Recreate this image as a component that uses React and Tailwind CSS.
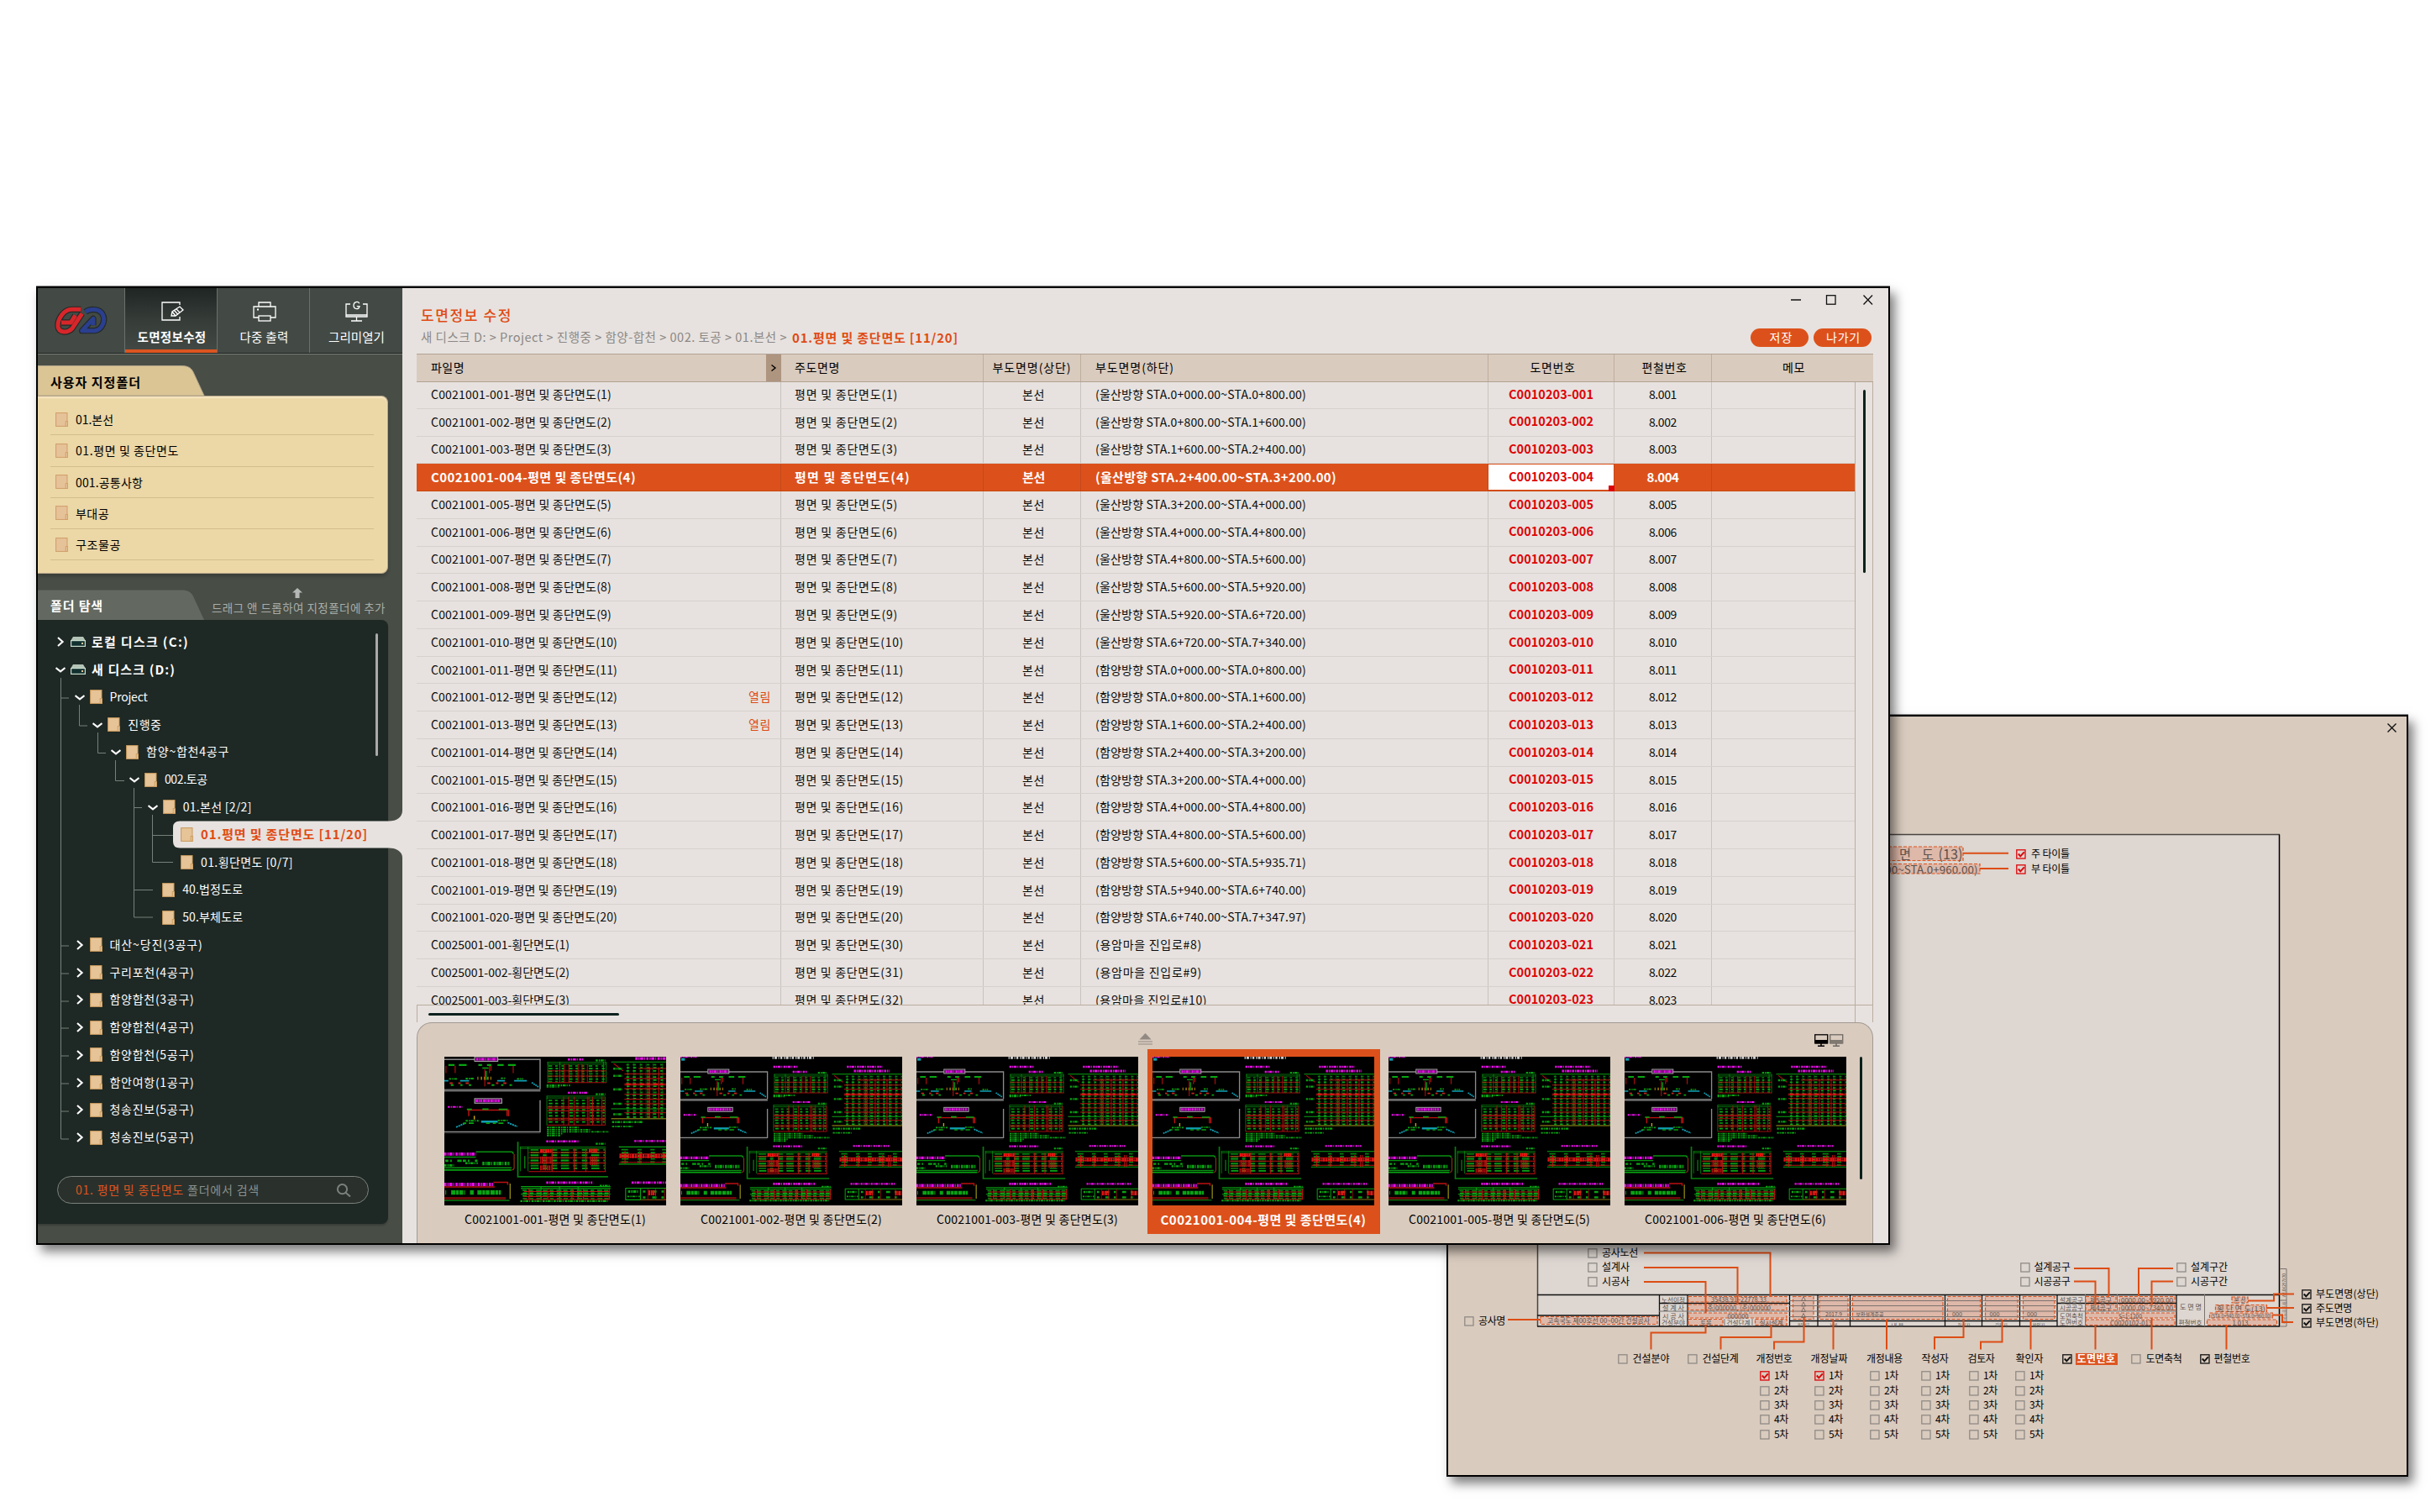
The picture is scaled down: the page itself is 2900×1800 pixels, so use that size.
import React, { useLayoutEffect, useRef } from "react";

const KR = "font-['Noto_Sans_CJK_KR','Noto_Sans',sans-serif]";

/* Single line of text whose tracking is adjusted so that it fills `w` pixels. */
function Fit({ w, className = "", children }) {
  const ref = useRef(null);
  useLayoutEffect(() => {
    const el = ref.current;
    el.style.letterSpacing = "0px";
    const natural = el.getBoundingClientRect().width;
    const n = el.textContent.length;
    if (n > 0 && w) el.style.letterSpacing = `${(w - natural) / n}px`;
  }, [w, children]);
  return (
    <span ref={ref} className={`inline-block -translate-y-px whitespace-pre leading-none ${className}`}>
      {children}
    </span>
  );
}

/* ---------- icons ---------- */
function Logo() {
  const red = "M196 113 H164 C134 113 112 148 114 174 C117 198 148 198 164 182 L200 128 M126 160 H160 L176 134";
  const blue = "M212 122 C228 110 260 110 272 128 C286 150 274 184 246 189 H200 L240 146 V170";
  return (
    <svg viewBox="102 100 192 108" className="h-9 w-16" fill="none" strokeLinejoin="round">
      <path d={blue} stroke="#232a27" strokeWidth="22" />
      <path d={blue} stroke="#2b3f8f" strokeWidth="15" />
      <path d={red} stroke="#232a27" strokeWidth="22" />
      <path d={red} stroke="#d7262b" strokeWidth="15" />
    </svg>
  );
}

function EditIcon() {
  return (
    <svg viewBox="0 0 28 24" className="h-6 w-7" fill="none" stroke="#fff" strokeWidth="1.3">
      <path d="M23 4 V1 H2 V22 H23 V18" />
      <path d="M13 17 L14 12 L23 6 L27 10 L18 17 Z M14 12 L18 17 M16.5 10.5 L20.5 15 M19 9 L23.5 13.5" />
    </svg>
  );
}

function PrinterIcon() {
  return (
    <svg viewBox="0 0 28 24" className="h-6 w-7" fill="none" stroke="#fff" strokeWidth="1.3">
      <path d="M7 6 V1 H21 V6" />
      <path d="M7 19 H1 V6 H27 V19 H21" />
      <rect x="7" y="17" width="14" height="6" />
      <path d="M5 9.5 H7" strokeWidth="2" />
    </svg>
  );
}

function MonitorGIcon() {
  return (
    <svg viewBox="0 0 28 24" className="h-6 w-7 overflow-visible" fill="none" stroke="#fff" strokeWidth="1.3">
      <path d="M6 3 H1 V18 H26 V3 H21 M1 16 H26" />
      <path d="M13.5 18 V23 M7 23 H20" />
      <path d="M16.8 2.2 C15.5 -.4 10 -.4 10 4.8 C10 9.8 17 9.600 17 5.600 H13.8" strokeWidth="1.3" />
    </svg>
  );
}

function FileIcon({ fill = "#e6c497", stroke = "#c99a5c" }) {
  return (
    <svg viewBox="0 0 15 17" className="h-[17px] w-[15px] shrink-0">
      <rect x=".6" y=".6" width="13.4" height="15.8" fill={fill} stroke={stroke} />
      <rect x="12.2" y="10.6" width="2.3" height="5.8" fill={fill} stroke={stroke} strokeWidth=".9" />
    </svg>
  );
}

function DriveIcon() {
  return (
    <svg viewBox="0 0 18 12" className="h-3 w-[18px] shrink-0">
      <path d="M3 0 H15 L18 5 H0 Z" fill="#b3c4b7" />
      <rect x=".6" y="4.6" width="16.8" height="6.8" fill="#11302f" stroke="#c9dccd" strokeWidth="1.2" />
      <rect x="13" y="7" width="2" height="2" fill="#e6c497" />
    </svg>
  );
}

function Chevron({ open }) {
  return (
    <svg viewBox="0 0 12 12" className="size-3 shrink-0" fill="none" stroke="#fff" strokeWidth="2.1">
      <path d={open ? "M0.5 4 L6 8.4 L11.5 4" : "M3 1 L8.6 6 L3 11"} />
    </svg>
  );
}

/* ---------- sidebar ---------- */
function NavTab({ icon, label, w, active }) {
  return (
    <div
      className={`relative flex w-[110px] flex-col items-center border-l border-l-[#6a716b] pl-0.5 pt-4 ${
        active ? "bg-linear-to-b from-[#1f2523] via-[#363d39] to-[#434a45]" : "bg-[#434a45]"
      }`}
    >
      {icon}
      <Fit w={w} className={`mt-3 text-[14.500px] text-white ${active ? "font-bold" : ""}`}>
        {label}
      </Fit>
      {active && <div className="absolute inset-x-0 bottom-0 h-1 bg-[#dd5520]" />}
    </div>
  );
}

function TabShape({ fill, stroke }) {
  return (
    <svg viewBox="0 0 200 36" className="absolute left-0 top-0 h-9 w-[200px]">
      <path d="M0 .5 H170 C180 .5 183 3 186 10 L198 36 H0 Z" fill={fill} stroke={stroke} />
    </svg>
  );
}

const FAVORITES = [
  ["01.본선", 45],
  ["01.평면 및 종단면도", 123],
  ["001.공통사항", 80],
  ["부대공", 40],
  ["구조물공", 54],
];

const TREE = [
  { lv: 0, t: "로컬 디스크 (C:)", w: 116, open: false },
  { lv: 0, t: "새 디스크 (D:)", w: 100, open: true },
  { lv: 1, t: "Project", w: 45, open: true },
  { lv: 2, t: "진행중", w: 40, open: true },
  { lv: 3, t: "함양~합천4공구", w: 99, open: true },
  { lv: 4, t: "002.토공", w: 51, open: true },
  { lv: 5, t: "01.본선 [2/2]", w: 82, open: true },
  { lv: 6, t: "01.평면 및 종단면도 [11/20]", w: 199, leaf: true, active: true },
  { lv: 6, t: "01.횡단면도 [0/7]", w: 110, leaf: true },
  { lv: 5, t: "40.법정도로", w: 72, leaf: true },
  { lv: 5, t: "50.부체도로", w: 72, leaf: true },
  { lv: 1, t: "대산~당진(3공구)", w: 111, open: false },
  { lv: 1, t: "구리포천(4공구)", w: 101, open: false },
  { lv: 1, t: "함양합천(3공구)", w: 101, open: false },
  { lv: 1, t: "함양합천(4공구)", w: 101, open: false },
  { lv: 1, t: "함양합천(5공구)", w: 101, open: false },
  { lv: 1, t: "함안여항(1공구)", w: 101, open: false },
  { lv: 1, t: "청송진보(5공구)", w: 101, open: false },
  { lv: 1, t: "청송진보(5공구)", w: 101, open: false },
];

const TREE_LINES =
  "M27.5 69 V618 H37 M27.5 93 H37 M27.5 388 H37 M27.5 421 H37 M27.5 454 H37 M27.5 486 H37 M27.5 519 H37 M27.5 552 H37 M27.5 585 H37 " +
  "M49.5 101 V126 H59 M71.5 134 V158.5 H81 M92.5 167 V191.5 H103 M114.5 200 V354 H137 M114.5 223.5 H124 M114.5 321.5 H137 " +
  "M136.5 232 V288.5 H161 M136.5 256.5 H161";

function TreeRow({ node }) {
  const indent = node.lv === 0 ? 21 : 43.5 + (node.lv - 1) * 21.8;
  return (
    <div className="relative flex h-[32.78px] items-center" style={{ paddingLeft: indent }}>
      {node.active && (
        <svg viewBox="0 0 273 56" className="absolute -top-3 left-[161px] h-14 w-[273px]">
          <path
            d="M273 0 C273 8 266 12.500 257 12.500 H8 Q0 12.500 0 20 V37 Q0 44.500 8 44.500 H257 C266 44.500 273 49 273 56 Z"
            fill="#e7e2df"
          />
        </svg>
      )}
      {!node.leaf && <Chevron open={node.open} />}
      <div className={`relative flex items-center ${node.leaf ? "ml-[17.500px]" : "ml-1.5"}`}>
        {node.lv === 0 ? <DriveIcon /> : <FileIcon />}
      </div>
      <Fit
        w={node.w}
        className={`relative ${node.lv === 0 ? "ml-[7px] text-[15px] font-bold text-white" : "ml-[9px]"} ${
          node.active ? "text-[15px] font-bold text-[#e04a12]" : "text-[14px] text-white"
        }`}
      >
        {node.t}
      </Fit>
    </div>
  );
}

function Sidebar() {
  return (
    <div className="flex w-[434px] shrink-0 flex-col bg-[#484d46]">
      <div className="flex h-[78px] border-b border-[#1d211f] bg-[#434a45] shadow-[0_1px_0_#7a7f78]">
        <div className="flex w-[103px] items-center justify-center">
          <Logo />
        </div>
        <NavTab icon={<EditIcon />} label="도면정보수정" w={82} active />
        <NavTab icon={<PrinterIcon />} label="다중 출력" w={58} />
        <NavTab icon={<MonitorGIcon />} label="그리미열기" w={67} />
      </div>

      <div className="relative mt-[14px] flex h-9 items-center pl-[15px]">
        <TabShape fill="#dbc594" stroke="#b0a48c" />
        <Fit w={108} className="relative mt-1 text-[15px] font-bold text-black">사용자 지정폴더</Fit>
      </div>
      <div className="h-[212px] w-[417px] rounded-r-lg border border-l-0 border-[#b5a68b] bg-[#ecd7a6] pl-[15px] pr-4 pt-[9px] shadow-[0_3px_4px_rgba(0,0,0,0.2),inset_0_2px_2px_rgba(255,240,210,0.6)]">
        {FAVORITES.map(([t, w]) => (
          <div key={t} className="flex h-[37.250px] items-center border-b border-[#d3bd8c] pl-1.5">
            <FileIcon fill="#e6c299" stroke="#cf9d68" />
            <Fit w={w} className="ml-[9px] mt-0.5 text-[14px] text-black">{t}</Fit>
          </div>
        ))}
      </div>

      <div className="relative mt-[19px] flex h-9 items-center justify-between pl-[15px] pr-5">
        <TabShape fill="#636961" stroke="none" />
        <Fit w={63} className="relative mt-0.5 text-[15px] font-bold text-white">폴더 탐색</Fit>
        <Fit w={207} className="relative mt-2.5 text-[13.500px] text-[#a9ada8]">드래그 앤 드롭하여 지정폴더에 추가</Fit>
        <svg viewBox="0 0 12 12" className="absolute -top-0.5 left-[303px] size-3" fill="#b5b8b4">
          <path d="M6 0 L12 5.500 H8.500 V12 H3.500 V5.500 H0 Z" />
        </svg>
      </div>
      <div className="relative h-[719px] w-[434px]">
        <div className="absolute inset-y-0 left-0 w-[417px] rounded-r-lg bg-[#1e2824] shadow-[0_2px_2px_rgba(0,0,0,0.2)]" />
        <svg viewBox="0 0 434 719" className="absolute inset-0" fill="none" stroke="#76807b">
          <path d={TREE_LINES} />
        </svg>
        <div className="relative pt-[10px]">
          {TREE.map((n, i) => (
            <TreeRow key={i} node={n} />
          ))}
        </div>
        <div className="absolute left-[402px] top-4 h-[146px] w-[3px] rounded-full bg-[#a9aaa9]" />
        <div className="relative ml-[23px] mt-[29.500px] flex h-[33px] w-[371px] items-center justify-between rounded-full border border-[#7d837e] bg-[#2a312c] pl-[21px] pr-5">
          <div className="flex items-center gap-1">
            <Fit w={129} className="text-[14px] text-[#dd5520]">01. 평면 및 종단면도</Fit>
            <Fit w={86} className="text-[14px] text-[#8b908c]">폴더에서 검색</Fit>
          </div>
          <svg viewBox="0 0 18 16" className="h-4 w-[18px]" fill="none" stroke="#7b817d" strokeWidth="2">
            <circle cx="7.500" cy="6.700" r="5.600" />
            <path d="M11.500 10.700 L17 15.500" />
          </svg>
        </div>
      </div>
    </div>
  );
}

/* ---------- drawing table ---------- */
const ULSAN = ["0+000.00~STA.0+800.00", "0+800.00~STA.1+600.00", "1+600.00~STA.2+400.00", "2+400.00~STA.3+200.00", "3+200.00~STA.4+000.00", "4+000.00~STA.4+800.00", "4+800.00~STA.5+600.00", "5+600.00~STA.5+920.00", "5+920.00~STA.6+720.00", "6+720.00~STA.7+340.00"];
const HAMYANG = ["0+000.00~STA.0+800.00", "0+800.00~STA.1+600.00", "1+600.00~STA.2+400.00", "2+400.00~STA.3+200.00", "3+200.00~STA.4+000.00", "4+000.00~STA.4+800.00", "4+800.00~STA.5+600.00", "5+600.00~STA.5+935.71", "5+940.00~STA.6+740.00", "6+740.00~STA.7+347.97"];

const pad = (n) => String(n).padStart(3, "0");
const ROWS = Array.from({ length: 23 }, (_, k) => {
  const i = k + 1;
  const cross = i > 20;
  return {
    i,
    file: cross ? `C0025001-${pad(i - 20)}-횡단면도(${i - 20})` : `C0021001-${pad(i)}-평면 및 종단면도(${i})`,
    fileW: cross ? 165 : i > 9 ? 222 : 215,
    main: `평면 및 종단면도(${cross ? i + 9 : i})`,
    mainW: i > 9 ? 130 : 123,
    sub: cross
      ? `(용암마을 진입로#${i - 13})`
      : `(${i <= 10 ? "울산" : "함양"}방향 STA.${i <= 10 ? ULSAN[i - 1] : HAMYANG[i - 11]})`,
    subW: cross ? (i === 23 ? 133 : 127) : 251,
    opened: i === 12 || i === 13,
    selected: i === 4,
  };
});

const COLS = "grid grid-cols-[434px_241px_116px_485px_150px_116px_170px]";

function Row({ r }) {
  const s = r.selected;
  const cell = `flex items-center border-r ${s ? "border-[#c4481a]" : "border-[#c9c3bf]"}`;
  return (
    <div
      className={`${COLS} h-[32.780px] border-b ${
        s ? "border-[#c8480f] bg-[#dc511b] text-[15px] font-bold text-white" : "border-[#d6d1cd] text-[14px] text-[#0c0c0c]"
      }`}
    >
      <div className={`${cell} justify-between pl-[17px] pr-[11px]`}>
        <Fit w={s ? 244 : r.fileW}>{r.file}</Fit>
        {r.opened && <Fit w={27} className="text-[#dd4a14]">열림</Fit>}
      </div>
      <div className={`${cell} pl-4`}>
        <Fit w={s ? 138 : r.mainW}>{r.main}</Fit>
      </div>
      <div className={`${cell} justify-center pl-1`}>
        <Fit w={27}>본선</Fit>
      </div>
      <div className={`${cell} pl-[17px]`}>
        <Fit w={s ? 287 : r.subW}>{r.sub}</Fit>
      </div>
      <div className={`${cell} relative justify-center font-bold text-[#dd0408]`}>
        {s && <div className="absolute inset-x-0 inset-y-px bg-white" />}
        {s && <div className="absolute -bottom-px -right-px h-[7px] w-[7px] bg-[#dd0408]" />}
        <Fit w={101} className="relative text-[14.500px]">{`C0010203-${pad(r.i)}`}</Fit>
      </div>
      <div className={`${cell} justify-center`}>
        <Fit w={s ? 38 : 33}>{`8.${pad(r.i)}`}</Fit>
      </div>
      <div />
    </div>
  );
}

function DrawingTable() {
  const h = "flex items-center border-r border-[#bfae9d]";
  return (
    <div className="ml-[17px] w-[1734px]">
      <div className="grid h-[34px] grid-cols-[434px_241px_116px_485px_150px_116px_191px] border-y border-[#b1a294] bg-[#d9cbbe] text-[14px] text-black">
        <div className="flex items-center justify-between pl-[17px]">
          <Fit w={40}>파일명</Fit>
          <div className="flex h-full w-[18px] items-center justify-center bg-[#ae957f]">
            <svg viewBox="0 0 8 8" className="size-2" fill="none" stroke="#000" strokeWidth="1.400">
              <path d="M1.500 0.500 L6 4 L1.500 7.500" />
            </svg>
          </div>
        </div>
        <div className={`${h} pl-4`}><Fit w={54}>주도면명</Fit></div>
        <div className={`${h} justify-center`}><Fit w={94}>부도면명(상단)</Fit></div>
        <div className={`${h} pl-[17px]`}><Fit w={94}>부도면명(하단)</Fit></div>
        <div className={`${h} justify-center pl-1`}><Fit w={54}>도면번호</Fit></div>
        <div className={`${h} justify-center pl-1`}><Fit w={54}>편철번호</Fit></div>
        <div className="flex items-center justify-center pl-1"><Fit w={27}>메모</Fit></div>
      </div>
      <div className="flex h-[741px] border-r border-[#b9ad9f]">
        <div className="w-[1712px] overflow-hidden">
          <div className="-mt-px">
            {ROWS.map((r) => (
              <Row key={r.i} r={r} />
            ))}
          </div>
        </div>
        <div className="flex flex-1 justify-center border-l border-[#b9ad9f] pt-[9px]">
          <div className="h-[218px] w-[3px] rounded-full bg-[#0b211d]" />
        </div>
      </div>
      <div className="flex h-[21px] border border-b-0 border-[#b9ad9f]">
        <div className="flex w-[1712px] items-center border-r border-[#b9ad9f] pl-[13px]">
          <div className="h-[3px] w-[227px] rounded-full bg-[#0b211d]" />
        </div>
      </div>
    </div>
  );
}

/* ---------- thumbnails ---------- */
const G = "#08a412";
const R = "#bd1010";
const M = "#e60be6";
const C = "#0fa0b4";

function Dabs({ x1, x2, y, h = 7, c = G, d = "7 3 4 2 10 3 3 4", o = 1 }) {
  return <path d={`M${x1} ${y} H${x2}`} stroke={c} strokeWidth={h} strokeDasharray={d} opacity={o} />;
}

function Lines({ xs = [], ys = [], x, y, w, h, c, sw = 2 }) {
  const d = xs.map((v) => `M${v} ${y} V${y + h}`).join(" ") + ys.map((v) => `M${x} ${v} H${x + w}`).join(" ");
  return <path d={d} stroke={c} strokeWidth={sw} fill="none" />;
}

function Cells({ x, w, y, step, n, d }) {
  return Array.from({ length: n }, (_, i) => (
    <Dabs key={i} x1={x + (i % 2)} x2={x + w} y={y + i * step} h={5} d={d} c={i % 3 ? "#09a814" : "#07800d"} />
  ));
}

function Thumb({ first }) {
  return (
    <svg viewBox={first ? "17 144 718 483" : "17 99 790 531"} preserveAspectRatio="none" className="block h-[177px] w-[264px] bg-black" fill="none">
      <Dabs x1={17} x2={75} y={100} c={M} h={5} />
      <rect x="20" y="104" width="13" height="9" fill={C} />
      <Dabs x1={345} x2={495} y={102} c="#cfcfcf" h={10} d="4 3 9 5 3 4 7 6" />
      {/* typical sections */}
      <path d="M17 153 H327 V250" stroke="#8b8b8b" strokeWidth="4" />
      <path d="M17 253 H328" stroke="#6c6c6c" strokeWidth="8" />
      <rect x="115" y="144" width="75" height="15" fill="#3b1040" stroke="#a0a0a0" strokeWidth="3" />
      <Dabs x1={120} x2={187} y={152} c={M} h={8} />
      <Dabs x1={30} x2={285} y={171} h={6} d="20 14 25 38 12 16 14 20" />
      <path d="M22 174 V197 M52 174 V197 M163 174 V197 M168 174 V190 M240 174 V197 M148 185 V240" stroke={R} strokeWidth="3" />
      <path d="M140 181 H160 M152 190 V220" stroke={G} strokeWidth="4" />
      <Dabs x1={124} x2={170} y={214} c="#b08a10" h={10} d="3 8 4 6" />
      <path d="M17 222 H30 M68 222 H97 M188 222 H213 M243 222 H284" stroke={C} strokeWidth="5" />
      <path d="M300 228 L323 243" stroke={C} strokeWidth="5" strokeDasharray="5 2" />
      <Dabs x1={32} x2={58} y={216} h={5} />
      <Dabs x1={86} x2={112} y={215} h={5} />
      <Dabs x1={200} x2={216} y={214} h={5} />
      <Dabs x1={252} x2={272} y={216} h={5} />
      <Dabs x1={34} x2={270} y={230} h={5} c="#c2261a" d="10 18 8 16 10 60" />
      <Dabs x1={38} x2={280} y={236} h={5} d="9 22 7 20 8 66" />
      <path d="M327 285 V388 H17" stroke="#8b8b8b" strokeWidth="4" />
      <path d="M17 393 H327" stroke="#1c1c1c" strokeWidth="3" />
      <rect x="115" y="280" width="88" height="15" fill="#3b1040" stroke="#a0a0a0" strokeWidth="3" />
      <Dabs x1={118} x2={196} y={287} c={M} h={9} d="8 2 3 2 6 3" />
      <Dabs x1={28} x2={75} y={307} c={M} h={6} />
      <path d="M92 317 H226 M96 318 V337 M220 318 V337 M225 318 V337" stroke={R} strokeWidth="4" />
      <path d="M90 315 H106 M140 314 H160 M193 315 H222" stroke={G} strokeWidth="5" />
      <path d="M114 336 V348" stroke="#c9a414" strokeWidth="4" />
      <path d="M136 355 H190" stroke={C} strokeWidth="7" />
      <path d="M55 373 L84 360 M222 358 L253 371" stroke={C} strokeWidth="5" strokeDasharray="6 2" />
      <Dabs x1={86} x2={128} y={352} h={5} />
      <Dabs x1={190} x2={226} y={351} h={5} />
      <Dabs x1={78} x2={236} y={360} h={5} d="10 8 16 40 12 10" />
      {/* table A */}
      <Dabs x1={348} x2={436} y={135} c={M} h={7} />
      <Dabs x1={417} x2={468} y={153} c={M} h={7} />
      <Dabs x1={507} x2={538} y={156} h={6} />
      <Lines x={350} y={161} w={192} h={68} c={G} xs={[352, 391, 532, 541]} ys={[162, 168]} />
      <Cells x={354} w={186} y={174} step={8.500} n={7} d="12 10 8 12 9 14" />
      <Lines x={350} y={168} w={192} h={60} c={R} xs={[405, 420, 450, 463, 480]} ys={[190, 207, 228]} sw={2.500} />
      <Dabs x1={348} x2={424} y={237} h={6} />
      <Dabs x1={348} x2={388} y={242} h={4} />
      {/* table B */}
      <Dabs x1={417} x2={481} y={261} c={M} h={6} />
      <Dabs x1={507} x2={538} y={266} h={6} />
      <Lines x={348} y={271} w={190} h={96} c={G} xs={[349]} ys={[272, 278]} />
      <Cells x={354} w={182} y={286} step={10} n={8} d="12 9 9 11 10 16" />
      <Lines x={350} y={274} w={188} h={92} c={R} xs={[403, 419, 437, 480, 485, 497, 527, 538]} ys={[307, 311, 320, 344, 349, 366]} sw={2.500} />
      {[374, 381, 388, 394, 400].map((y, i) => (
        <Dabs key={y} x1={349} x2={[452, 490, 548, 400, 395][i]} y={y} h={5} />
      ))}
      {/* table C */}
      <Dabs x1={610} x2={736} y={135} c={M} h={7} />
      <Dabs x1={635} x2={761} y={150} c={M} h={9} />
      <Lines x={557} y={161} w={250} h={150} c={G} ys={[161, 313]} sw={3} />
      <path d="M557 345 H807" stroke="#6f6a10" strokeWidth="4" />
      <path d="M565 166 L596 190" stroke={R} strokeWidth="3" />
      <Lines x={600} y={165} w={1} h={178} c="#0a5a10" xs={[611, 631, 651, 670, 692, 724, 742, 762, 784, 803]} sw={2} />
      <Cells x={606} w={201} y={170} step={10} n={18} d="9 12 10 13 8 14" />
      <Lines x={645} y={178} w={162} h={166} c={R} xs={[676, 682, 711, 753]} ys={[182]} sw={3} />
      <Lines x={600} y={178} w={207} h={1} c={R} ys={[200, 215, 232, 236, 248, 266, 282, 297, 326]} sw={3} />
      <Dabs x1={606} x2={807} y={233} h={5} c="#ee1616" d="14 8 10 12" />
      {[183, 206, 250, 297, 331].map((y) => (
        <Dabs key={y} x1={564} x2={594} y={y} h={7} />
      ))}
      <Dabs x1={560} x2={660} y={356} h={7} />
      <Dabs x1={560} x2={627} y={371} h={5} />
      {/* table D */}
      <Dabs x1={347} x2={451} y={419} c={M} h={7} />
      <Dabs x1={507} x2={538} y={427} h={6} />
      <path d="M255 420 V534 H547" stroke="#0a7d10" strokeWidth="5" />
      <Lines x={262} y={436} w={278} h={80} c={G} xs={[263, 288]} ys={[437, 442]} />
      <Cells x={296} w={240} y={447} step={8.500} n={8} d="26 14 12 16 18 12" />
      <Lines x={290} y={442} w={250} h={75} c={R} xs={[366, 438, 475, 538]} ys={[455, 472, 489, 517]} sw={3} />
      <Dabs x1={276} x2={282} y={487} h={40} d="3 20" />
      <Dabs x1={327} x2={364} y={450} h={12} c="#f01212" d="8 1 5 2" />
      <Dabs x1={327} x2={364} y={480} h={24} c="#c81010" d="3 2 6 2" o={0.85} />
      <Dabs x1={327} x2={364} y={505} h={16} c="#e01010" d="5 2" o={0.85} />
      <Dabs x1={485} x2={513} y={449} h={12} c="#f01212" d="6 1 5 2" />
      <Dabs x1={488} x2={512} y={482} h={28} c="#c81010" d="4 3" o={0.85} />
      {/* table E */}
      <Dabs x1={632} x2={761} y={418} c={M} h={6} />
      <Lines x={582} y={437} w={225} h={56} c={G} xs={[]} ys={[437, 493]} sw={3} />
      <Cells x={590} w={217} y={446} step={10} n={5} d="22 30 14 28 14 24" />
      <Lines x={584} y={450} w={223} h={42} c={R} xs={[602, 650, 738, 758, 765]} ys={[460, 470, 487]} sw={3} />
      <Dabs x1={584} x2={807} y={467} c="#ee1414" h={13} d="6 3 3 2 9 2" o={0.9} />
      {/* note boxes */}
      <Dabs x1={17} x2={119} y={460} c={M} h={10} />
      <path d="M17 470 H119 M119 453 H234 Q240 453 240 460 M17 505 H235" stroke="#0a8f12" strokeWidth="4" />
      <path d="M243 460 V504 Q243 510 236 512" stroke="#8f3a10" strokeWidth="3" />
      <path d="M17 512 H234" stroke={G} strokeWidth="5" />
      <Dabs x1={20} x2={124} y={482} h={7} d="10 6 5 18 14 4" />
      <Dabs x1={17} x2={48} y={497} h={7} />
      <Dabs x1={85} x2={125} y={490} h={7} />
      <Dabs x1={140} x2={229} y={491} h={12} />
      <Dabs x1={17} x2={176} y={559} c={M} h={11} />
      <path d="M17 567 H180 M176 552 H222 V560" stroke={R} strokeWidth="4" />
      <path d="M230 556 V606" stroke="#8a8412" strokeWidth="4" />
      <path d="M17 604 H216" stroke="#6e0a0a" strokeWidth="8" />
      <path d="M17 611 H228" stroke="#0a8f12" strokeWidth="3" />
      <Dabs x1={20} x2={112} y={585} h={14} d="3 16 14 2 9 2 12 3" />
      <Dabs x1={124} x2={200} y={585} h={14} d="14 2 9 2 12 3" />
      {/* bottom tables */}
      <Dabs x1={347} x2={496} y={553} c={M} h={8} />
      <Lines x={265} y={567} w={290} h={42} c={G} xs={[330, 390, 450]} ys={[566, 572, 590]} sw={3} />
      <Cells x={270} w={282} y={578} step={9} n={4} d="14 8 12 10 16 6" />
      <Lines x={275} y={572} w={278} h={36} c={R} xs={[291, 352, 430, 467, 551]} ys={[582, 598, 608]} sw={3} />
      <Dabs x1={263} x2={546} y={613} h={6} />
      <Dabs x1={520} x2={552} y={563} h={6} />
      <Dabs x1={623} x2={781} y={553} c={M} h={7} />
      <Lines x={603} y={570} w={204} h={40} c={G} xs={[604, 652]} ys={[571, 609]} sw={3} />
      <Dabs x1={612} x2={645} y={582} h={8} />
      <Dabs x1={609} x2={650} y={598} h={5} />
      <Dabs x1={660} x2={807} y={582} h={7} d="8 22 14 16" />
      <Dabs x1={660} x2={807} y={601} h={7} d="8 22 14 16" />
      <Lines x={652} y={572} w={155} h={38} c={R} xs={[676, 701, 730, 783]} ys={[609]} />
      <Dabs x1={678} x2={702} y={586} c="#e81414" h={16} d="6 2 4 1" />
      <Dabs x1={782} x2={805} y={586} c="#e81414" h={16} d="6 2 4 1" />
    </svg>
  );
}

function ThumbPanel() {
  return (
    <div className="relative ml-[17px] flex w-[1734px] flex-1 flex-col rounded-t-[18px] border border-b-0 border-[#a29a92] bg-[#d9cbbe]">
      <svg viewBox="0 0 17 14" className="absolute left-[858px] top-[12px] h-3.5 w-[17px]">
        <path d="M8.500 0 L15.500 7.500 H1.500 Z" fill="#928a82" />
        <path d="M0 10 H17 M0 13 H17" stroke="#928a82" strokeWidth="1.200" />
      </svg>
      <svg viewBox="0 0 36 15" className="absolute left-[1662px] top-[13px] h-[15px] w-9" fill="none">
        <rect x="1.700" y=".8" width="15" height="10" stroke="#000" strokeWidth="1.300" />
        <path d="M1.500 7 H17 V11.500 H1.500 Z" fill="#000" />
        <path d="M9 11 V14 M5 14.200 H13" stroke="#000" strokeWidth="1.500" />
        <rect x="19.700" y=".8" width="15" height="10" stroke="#6e6863" strokeWidth="1.300" />
        <path d="M19.500 7 H35 V11.500 H19.500 Z" fill="#807972" />
        <path d="M27 11 V14 M23 14.200 H31" stroke="#6e6863" strokeWidth="1.500" />
      </svg>
      <div className="ml-[25.500px] mt-[31px] flex gap-[4px]">
        {[1, 2, 3, 4, 5, 6].map((n) => {
          const s = n === 4;
          return (
            <div key={n} className={`flex h-[220px] w-[277px] flex-col items-center pt-[9px] ${s ? "bg-[#dc511b]" : ""}`}>
              <Thumb first={n === 1} />
              <div className="flex h-[34px] items-center">
                <Fit w={s ? 245 : 216} className={s ? "text-[15px] font-bold text-white" : "text-[14px] text-black"}>
                  {`C0021001-${pad(n)}-평면 및 종단면도(${n})`}
                </Fit>
              </div>
            </div>
          );
        })}
      </div>
      <div className="absolute left-[1717px] top-[40px] h-[146px] w-[3px] rounded-full bg-[#0b211d]" />
    </div>
  );
}

/* ---------- main window ---------- */
function MainWindow() {
  return (
    <div className="absolute left-[43px] top-[341px] flex h-[1141px] w-[2207px] border-2 border-black bg-[#e7e2df] shadow-[0_-1px_0_#8b8b8b,6px_8px_12px_rgba(0,0,0,0.5)]">
      <Sidebar />
      <div className="flex flex-1 flex-col">
        <div className="flex h-[78px] justify-between pl-[22px]">
          <div className="flex flex-col items-start pt-6">
            <Fit w={109} className="text-[17px] font-medium text-[#e04a12]">도면정보 수정</Fit>
            <div className="mt-[11px] flex items-center gap-[6px]">
              <Fit w={436} className="text-[14.500px] text-[#8c8885]">
                {"새 디스크 D: > Project > 진행중 > 함양-합천 > 002. 토공 > 01.본선 >"}
              </Fit>
              <Fit w={198} className="text-[15px] font-bold text-[#e04a12]">01.평면 및 종단면도 [11/20]</Fit>
            </div>
          </div>
          <div className="flex flex-col items-end pr-5">
            <svg viewBox="0 0 98 12" className="mr-[-2px] mt-[8px] h-3 w-[98px]" fill="none" stroke="#111" strokeWidth="1.300">
              <path d="M0 6 H12 M86.500 .5 L97 11.500 M97 .5 L86.500 11.500" />
              <rect x="42.500" y=".7" width="10.500" height="10.500" />
            </svg>
            <div className="mt-[28px] flex gap-1.5 text-[14px] text-white">
              <div className="flex h-[22px] w-[69px] items-center justify-center rounded-full bg-[#dc511b] pl-1"><Fit w={28}>저장</Fit></div>
              <div className="flex h-[22px] w-[69px] items-center justify-center rounded-full bg-[#dc511b] pl-0.5"><Fit w={41}>나가기</Fit></div>
            </div>
          </div>
        </div>
        <DrawingTable />
        <ThumbPanel />
      </div>
    </div>
  );
}

/* ---------- field dialog ---------- */
function Box({ state }) {
  const col = state === "red" ? "#dd0408" : state === "on" ? "#111" : "#8b8681";
  return (
    <svg viewBox="0 0 12 12" className="size-3 shrink-0" fill="none">
      <rect x=".8" y=".8" width="10.200" height="10.200" stroke={col} strokeWidth={state ? 1.300 : 1.200} />
      {state && <path d="M2.800 5.500 L5.300 8.300 L9.800 3.300" stroke={col} strokeWidth="2" />}
    </svg>
  );
}

/* [box x, centre y, text x, text width, label, state] in desktop coordinates */
const FIELDS = [
  [2400, 1017, 2418, 46, "주 타이틀", "red"],
  [2400, 1034.5, 2418, 46, "부 타이틀", "red"],
  [1890, 1491.5, 1907, 43, "공사노선"],
  [1890, 1508.5, 1907, 33, "설계사"],
  [1890, 1525.5, 1907, 33, "시공사"],
  [1743, 1572.5, 1760, 32, "공사명"],
  [2405, 1508.5, 2421.5, 43, "설계공구"],
  [2405, 1525.5, 2421.5, 43, "시공공구"],
  [2591, 1508.5, 2608, 44, "설계구간"],
  [2591, 1525.5, 2608, 44, "시공구간"],
  [2740, 1540.5, 2757, 75, "부도면명(상단)", "on"],
  [2740, 1558, 2757, 43, "주도면명", "on"],
  [2740, 1575, 2757, 75, "부도면명(하단)", "on"],
  [1926, 1617.5, 1943.5, 44, "건설분야"],
  [2009, 1617.5, 2026.5, 43, "건설단계"],
  [2455, 1617.5, 2470.5, 44, "도면번호", "on", true],
  [2537, 1617.5, 2554.5, 43, "도면축척"],
  [2619, 1617.5, 2635.5, 43, "편철번호", "on"],
];

const REVISIONS = [
  [2095, 2090.5, 43, "개정번호", true],
  [2160, 2155.5, 44, "개정날짜", true],
  [2226, 2222, 43, "개정내용"],
  [2287, 2287.5, 32, "작성자"],
  [2344, 2342.5, 32, "검토자"],
  [2399, 2399.5, 33, "확인자"],
];

function S({ x, y, w, t, f = 7.5, fill = "#5a524d", mid = true }) {
  return (
    <text x={x} y={y} fontSize={f} fill={fill} textAnchor={mid ? "middle" : "start"} dominantBaseline="central" textLength={w} lengthAdjust="spacingAndGlyphs">
      {t}
    </text>
  );
}

const ZONES = [
  [1834, 1567.5, 139, 9], [2010, 1543.5, 117, 6.5], [2010, 1553, 117, 6.5], [2010, 1563, 117, 6], [2010, 1570.5, 41, 7],
  [2089.5, 1570.5, 37.5, 7], [2134.5, 1543.5, 24.5, 27], [2166, 1543.5, 34, 27], [2205.5, 1543.5, 107.5, 27],
  [2318.5, 1543.5, 39, 27], [2363.5, 1543.5, 38.5, 27], [2408.5, 1543.5, 37.5, 27], [2483, 1543.5, 36, 6.5],
  [2523, 1543.5, 66, 6.5], [2483, 1553, 36, 6.5], [2523, 1553, 66, 6.5], [2483, 1563, 106, 6], [2483, 1571, 106, 6.5],
  [2657, 1544, 19, 7], [2637.5, 1553.5, 61, 8], [2630.5, 1563, 75, 6], [2627.5, 1571, 83, 6.5],
  [2200, 1008, 137, 16.5], [2170, 1028.5, 187, 11.5],
];

function Sheet() {
  const revs = [2147, 2183, 2259, 2338, 2382.5, 2427];
  const names = ["개정번호", "날짜", "내  용", "작성자", "검토자", "확인자"];
  return (
    <svg viewBox="1724 853 1141 903" className="absolute left-0 top-0 h-[903px] w-[1141px]" fill="none">
      <rect x="1830.500" y="993.500" width="883.500" height="585.500" fill="#ddd6d1" />
      <g fill="#e08a6a" fillOpacity=".38">
        {ZONES.map((z, i) => (
          <rect key={i} x={z[0]} y={z[1]} width={z[2]} height={z[3]} />
        ))}
      </g>
      <path d="M1830.500 1579 V993.500 H2714" stroke="#4a4441" strokeWidth="1.500" />
      <path d="M2713.500 993.500 V1579" stroke="#000" strokeWidth="1.500" />
      <path d="M1830 1541.500 H2714 M1830 1579 H2714 M1830 1566 H1975 M1975.500 1541 V1579 M2009 1541 V1579 M2130.500 1541 V1579 M2164 1541 V1579 M2202.500 1541 V1579 M2315.500 1541 V1579 M2359.500 1541 V1579 M2404.500 1541 V1579 M2449 1541 V1579 M2591 1541 V1579 M1975 1551.500 H2130 M2449 1551.500 H2591 M2130 1572.500 H2449" stroke="#111" strokeWidth="1.300" />
      <path d="M1975 1561 H2130 M2449 1561 H2591 M2130 1548.500 H2449 M2130 1554.500 H2449 M2130 1561 H2449 M2130 1567.500 H2449 M2482.500 1541 V1579 M2520.500 1541 V1560 M2624.500 1541 V1579 M2714 1510.500 H2722 V1579 H2714 M2714 1548 H2722 M2053 1570 V1579 M2086 1570 V1579" stroke="#7b736e" />
      <g stroke="#dd5520" strokeDasharray="4 2" strokeWidth="1.200">
        {ZONES.map((z, i) => (
          <rect key={i} x={z[0]} y={z[1]} width={z[2]} height={z[3]} />
        ))}
      </g>
      <S x={2268} y={1015.500} w={14} t="면" f={16} />
      <S x={2295} y={1015.500} w={14} t="도" f={16} />
      <S x={2322} y={1015.500} w={29} t="(13)" f={17} />
      <S x={2263} y={1034} w={183} t="(STA.0+940.00~STA.0+960.00)" f={12.500} />
      <S x={1903} y={1571.500} w={122} t="고속국도 제00호선 00~00간 건설공사" />
      <S x={1992} y={1547} w={28} t="노선이정" />
      <S x={1992} y={1556.500} w={26} t="설 계 사" />
      <S x={1992} y={1566} w={26} t="시 공 사" />
      <S x={1992} y={1574} w={28} t="건설분야" />
      <S x={2070} y={1546.500} w={66} t="35438.91~22778.33" />
      <S x={2069} y={1556.500} w={78} t="(주)000000, (주)000000" />
      <S x={2069} y={1566} w={25} t="000000" />
      <S x={2031} y={1574} w={13} t="토목" />
      <S x={2069.500} y={1574} w={28} t="건설단계" />
      <S x={2108.500} y={1574} w={28} t="실시설계" />
      {[1545.5, 1552, 1558.5, 1565.5].map((y) => (
        <path key={y} d={`M2144.500 ${y + 3} L2147 ${y - 2} L2149.500 ${y + 3} Z`} stroke="#6b5f58" strokeWidth=".8" />
      ))}
      <S x={2183} y={1564.500} w={20} t="2017.9" f={6} />
      <S x={2226} y={1564.500} w={33} t="보완설계준공" f={6} />
      {[2330, 2374.5, 2419].map((x) => (
        <S key={x} x={x} y={1564.500} w={12} t="000" f={6} />
      ))}
      {revs.map((x, i) => (
        <S key={x} x={x} y={1576} w={i === 1 ? 9 : 15} t={names[i]} f={5} />
      ))}
      <S x={2466} y={1547} w={28} t="설계공구" />
      <S x={2466} y={1556.500} w={28} t="시공공구" />
      <S x={2466} y={1566} w={28} t="도면축척" />
      <S x={2466} y={1574} w={28} t="도면번호" />
      <S x={2501} y={1547} w={26} t="제5공구" />
      <S x={2501} y={1556.500} w={26} t="제4공구" />
      <S x={2556} y={1547} w={62} t="0000.00~5920.00" />
      <S x={2556} y={1556.500} w={62} t="0000.00~7340.00" />
      <S x={2536} y={1566} w={28} t="S=1:1200" />
      <S x={2537} y={1574} w={50} t="C0020102-013" />
      <S x={2608} y={1555.500} w={26} t="도 면 명" />
      <S x={2607.500} y={1574} w={28} t="편철번호" />
      <S x={2666.500} y={1547.500} w={14} t="본 선" />
      <S x={2668} y={1557.500} w={58} t="횡 단 면 도(13)" />
      <S x={2668} y={1566} w={72} t="(STA.0+940.00~STA.0+960.00)" f={6} />
      <S x={2667} y={1574.500} w={19} t="1.013" />
      <g transform="translate(2718 1530) rotate(-90)"><S x={0} y={0} w={28} t="A3.0X297X70" f={5} /></g>
      <g transform="translate(2718 1563) rotate(-90)"><S x={0} y={0} w={26} t="한국도로공사" f={5} /></g>
      <path
        d="M2337 1015.700 H2391 M2357 1034 H2391 M1957 1491.500 H2107.500 V1543 M1957 1509 H2068.500 V1553 M1957 1526 H2030.500 V1563 M1795 1571 H1834
           M2030.500 1577 V1586.500 H1965.500 V1606.500 M2108.500 1577 V1592 H2048.500 V1606.500 M2147.500 1568 V1597.500 H2112 V1606.500 M2182.500 1571 V1606.500 M2246 1571 V1606.500
           M2337.500 1571 V1592 H2303 V1606.500 M2383.500 1571 V1597.500 H2358 V1606.500 M2417.500 1571 V1606.500
           M2469 1510 H2510.500 V1543 M2469 1525.500 H2494.500 V1553 M2587 1510 H2546 V1543 M2587 1525.500 H2561.500 V1553
           M2494.500 1577 V1606.500 M2561.500 1569 V1606.500 M2650.500 1577 V1606.500
           M2731 1540.500 H2707 V1548.500 H2676 M2698 1557 H2731 M2705 1565.500 H2717 V1574 H2730"
        stroke="#dd4d14"
        strokeWidth="2"
      />
    </svg>
  );
}

function FieldDialog() {
  return (
    <div className="absolute left-[1722px] top-[851px] h-[907px] w-[1145px] border-2 border-black bg-[#d9cbbe] text-[12px] text-black shadow-[0_-1px_0_#8b8b8b,6px_8px_12px_rgba(0,0,0,0.5)]">
      <svg viewBox="0 0 11 11" className="absolute right-[12px] top-2 size-[11px]" stroke="#111" strokeWidth="1.400">
        <path d="M.5 .5 L10.500 10.500 M10.500 .5 L.5 10.500" />
      </svg>
      <Sheet />
      {FIELDS.map(([bx, y, tx, w, t, st, hot]) => (
        <div key={t} className="absolute flex h-4 items-center" style={{ left: bx - 1724, top: y - 861, gap: tx - bx - 12 }}>
          <Box state={st} />
          {hot ? (
            <div className="flex h-[14px] items-center bg-[#dd5520] px-0.5 font-bold text-white"><Fit w={46}>{t}</Fit></div>
          ) : (
            <Fit w={w}>{t}</Fit>
          )}
        </div>
      ))}
      {REVISIONS.map(([bx, tx, w, t, on]) => (
        <div key={t} className="absolute flex flex-col items-start" style={{ left: Math.min(bx, tx) - 1724, top: 756.5 }}>
          <div className="flex h-4 items-center" style={{ paddingLeft: Math.max(0, tx - bx) }}>
            <Fit w={w}>{t}</Fit>
          </div>
          <div className="mt-1 flex flex-col" style={{ paddingLeft: Math.max(0, bx - tx) }}>
            {[1, 2, 3, 4, 5].map((n) => (
              <div key={n} className="flex h-[17.400px] items-center gap-[5px]">
                <Box state={on && n === 1 ? "red" : undefined} />
                <Fit w={17}>{`${n}차`}</Fit>
              </div>
            ))}
          </div>
        </div>
      ))}
    </div>
  );
}

export default function App() {
  return (
    <div className={`relative h-[1800px] w-[2900px] overflow-hidden bg-white ${KR}`}>
      <FieldDialog />
      <MainWindow />
    </div>
  );
}
